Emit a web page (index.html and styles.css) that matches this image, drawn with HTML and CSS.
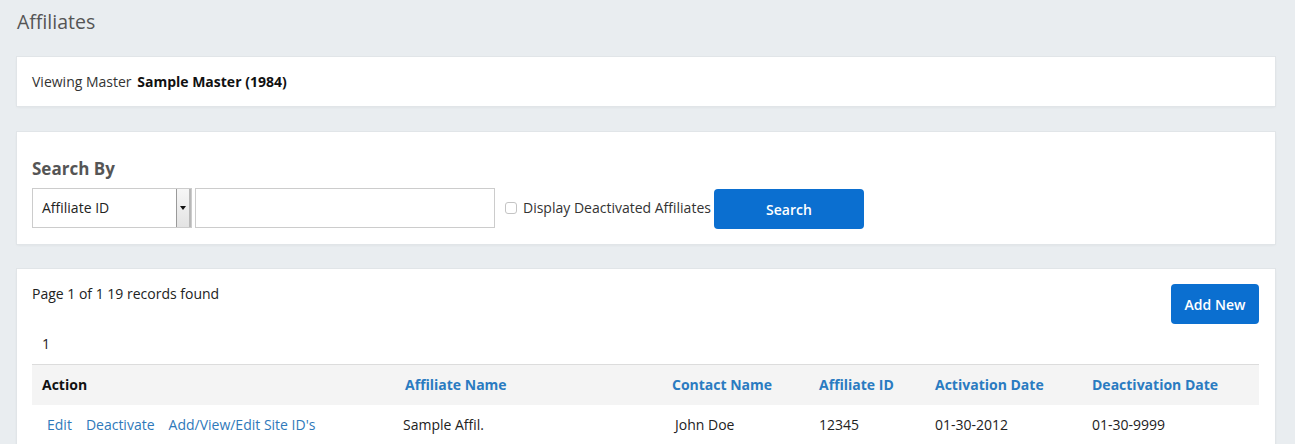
FILE: index.html
```html
<!DOCTYPE html>
<html lang="en">
<head>
<meta charset="utf-8">
<title>Affiliates</title>
<link rel="stylesheet" href="styles.css">
</head>
<body>
<div class="page">
  <h1 class="title">Affiliates</h1>

  <section class="card card-master">
    <span class="muted">Viewing Master</span>
    <strong class="master-name">Sample Master (1984)</strong>
  </section>

  <section class="card card-search">
    <h2 class="search-heading">Search By</h2>
    <div class="search-row">
      <div class="select">
        <span class="select-value">Affiliate ID</span>
        <span class="select-arrow"><span class="tri"></span></span>
      </div>
      <input class="text-input" type="text" aria-label="Search value">
      <label class="check-label"><input class="check" type="checkbox">Display Deactivated Affiliates</label>
      <button class="btn btn-search" type="button">Search</button>
    </div>
  </section>

  <section class="card card-results">
    <div class="results-top">
      <div class="records">Page 1 of 1 19 records found</div>
      <button class="btn btn-add" type="button">Add New</button>
    </div>
    <div class="pager">1</div>
    <table class="grid">
      <colgroup>
        <col class="c1"><col class="c2"><col class="c3"><col class="c4"><col class="c5"><col class="c6">
      </colgroup>
      <thead>
        <tr>
          <th class="plain">Action</th>
          <th>Affiliate Name</th>
          <th>Contact Name</th>
          <th>Affiliate ID</th>
          <th>Activation Date</th>
          <th>Deactivation Date</th>
        </tr>
      </thead>
      <tbody>
        <tr>
          <td><span class="actions"><a href="#">Edit</a><a href="#">Deactivate</a><a href="#">Add/View/Edit Site ID's</a></span></td>
          <td class="name">Sample Affil.</td>
          <td class="contact">John Doe</td>
          <td>12345</td>
          <td>01-30-2012</td>
          <td>01-30-9999</td>
        </tr>
      </tbody>
    </table>
  </section>
</div>
</body>
</html>
```

FILE: styles.css
```css
* { box-sizing: border-box; }

html, body {
  margin: 0;
  padding: 0;
  background: #e9edf0;
  font-family: "Open Sans", "Liberation Sans", Arial, sans-serif;
  font-size: 14px;
  color: #222;
}

.page {
  padding: 10px 20px 0 17px;
}

.title {
  margin: 0 0 23px;
  font-size: 19.5px;
  line-height: 24px;
  font-weight: 400;
  color: #555;
}

.card {
  background: #fff;
  box-shadow: 0 0 0 1px #e1e5e8, 0 1px 3px rgba(0, 0, 0, 0.07);
  margin-bottom: 26px;
}

.card-master {
  height: 49px;
  padding: 16px 15px 15px;
  line-height: 18px;
}

.muted { color: #333; }

.master-name {
  margin-left: 2px;
  font-weight: 700;
  color: #111;
}

.card-search {
  height: 112px;
  padding: 26px 15px 16px;
  margin-bottom: 25px;
}

.search-heading {
  margin: 0 0 8px;
  font-size: 17px;
  line-height: 22px;
  font-weight: 700;
  color: #555;
}

.search-row {
  display: flex;
  align-items: center;
  height: 40px;
}

.select {
  display: flex;
  width: 160px;
  height: 40px;
  border: 1px solid #ccc;
  background: #fff;
}

.select-value {
  flex: 1;
  padding-left: 9px;
  line-height: 38px;
  color: #222;
}

.select-arrow {
  width: 15px;
  display: flex;
  align-items: center;
  justify-content: center;
  background: linear-gradient(#f6f6f6, #e3e3e3);
  border-left: 1px solid #9a9a9a;
  border-right: 2px solid #b8b8b8;
}

.tri {
  width: 0;
  height: 0;
  border-left: 3px solid transparent;
  border-right: 3px solid transparent;
  border-top: 4px solid #111;
}

.text-input {
  width: 300px;
  height: 40px;
  margin: 0 0 0 3px;
  border: 1px solid #ccc;
  padding: 0 8px;
  font: inherit;
  outline: none;
}

.check-label {
  display: flex;
  align-items: center;
  margin-left: 10px;
  color: #333;
  line-height: 18px;
}

.check {
  appearance: none;
  -webkit-appearance: none;
  width: 12px;
  height: 12px;
  margin: 0 6px 0 0;
  border: 1px solid #c4c4c4;
  border-radius: 3px;
  background: #fff;
}

.btn {
  border: 0;
  border-radius: 4px;
  background: #0b6fd0;
  color: #fff;
  font-family: inherit;
  font-size: 14px;
  font-weight: 600;
  cursor: pointer;
}

.btn-search {
  width: 150px;
  height: 40px;
  margin-left: 3px;
  margin-top: 2px;
}

.card-results {
  padding: 15px 16px 0 15px;
  min-height: 200px;
  margin-bottom: 0;
}

.results-top {
  display: flex;
  justify-content: space-between;
  align-items: flex-start;
  height: 40px;
}

.records {
  line-height: 20px;
  color: #222;
}

.btn-add {
  width: 88px;
  height: 40px;
}

.pager {
  height: 40px;
  line-height: 40px;
  padding-left: 10px;
  color: #222;
}

.grid {
  width: 100%;
  border-collapse: collapse;
  table-layout: fixed;
}

.c1 { width: 363px; }
.c2 { width: 267px; }
.c3 { width: 147px; }
.c4 { width: 116px; }
.c5 { width: 157px; }
.c6 { width: 177px; }

.grid thead tr {
  background: #f4f4f4;
  border-top: 1px solid #dcdcdc;
}

.grid th {
  height: 40px;
  padding: 0 10px;
  text-align: left;
  font-weight: 700;
  color: #2a7bc1;
  white-space: nowrap;
}

.grid th.plain { color: #111; }

.grid td {
  height: 40px;
  padding: 0 10px;
  white-space: nowrap;
  color: #222;
}

.grid td.name { padding-left: 8px; }
.grid td.contact { padding-left: 13px; }

.actions {
  display: inline-flex;
  gap: 14px;
  padding-left: 5px;
}

.actions a {
  color: #2f79ba;
  text-decoration: none;
}
```
